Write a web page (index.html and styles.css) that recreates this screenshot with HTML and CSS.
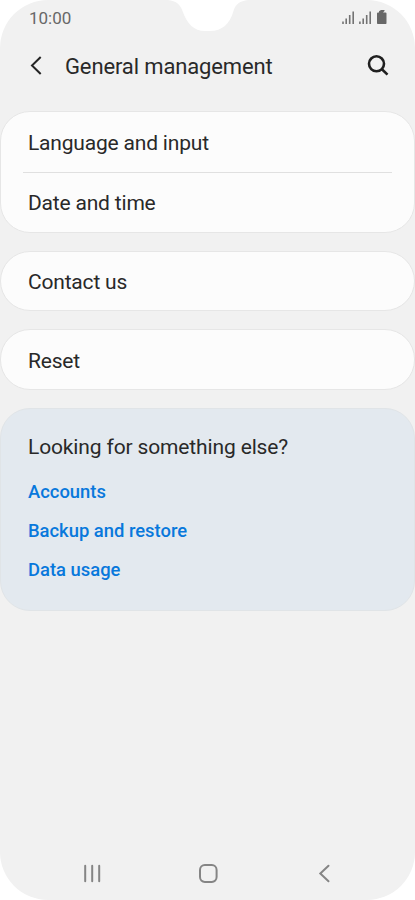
FILE: index.html
```html
<!DOCTYPE html>
<html lang="en">
<head>
<meta charset="utf-8">
<title>General management</title>
<link rel="stylesheet" href="styles.css">
</head>
<body>
<div class="phone">
  <svg class="notch" width="90" height="32" viewBox="0 0 90 32" aria-hidden="true"><path d="M5 0C13 1 17 4 19.500 11C24 24 31 31 42 31H47C59 31 67 24 70.500 11C72.500 4 77 1 85 0Z"/></svg>
  <header class="status">
    <span class="clock">10:00</span>
    <svg class="indicators" width="46" height="16" viewBox="0 0 46 16" aria-hidden="true">
      <path class="bars" d="M2 11.500v2.500M5.200 8.500v5.500M8.700 5v9M12.200 1.500v12.500M18.900 11.500v2.500M22.200 8.500v5.500M25.700 5v9M29.200 1.500v12.500"/>
      <path class="battery" d="M37 2.500H38V1.300L40 0H43.500V1L42 2.500H44.500a1 1 0 0 1 1 1V13.300a.8 .8 0 0 1-.8 .8H36.800a.8 .8 0 0 1-.8-.8V3.500a1 1 0 0 1 1-1Z"/>
    </svg>
  </header>
  <div class="toolbar">
    <svg class="back" width="12" height="20" viewBox="0 0 12 20" aria-hidden="true"><path d="M10.700 1L2 9.500L10.700 18"/></svg>
    <h1 class="title">General management</h1>
    <svg class="search" width="22" height="22" viewBox="0 0 22 22" aria-hidden="true"><circle cx="9.500" cy="8.800" r="7.500"/><path d="M14.900 14.200L20.500 19.600"/></svg>
  </div>
  <main class="content">
    <section class="card">
      <div class="row">Language and input</div>
      <div class="divider"></div>
      <div class="row">Date and time</div>
    </section>
    <section class="card contact"><div class="row">Contact us</div></section>
    <section class="card"><div class="row">Reset</div></section>
    <section class="card suggestions">
      <h2 class="question">Looking for something else?</h2>
      <a class="link">Accounts</a>
      <a class="link">Backup and restore</a>
      <a class="link">Data usage</a>
    </section>
  </main>
  <nav class="navbar">
    <svg width="20" height="20" viewBox="0 0 20 20" aria-hidden="true"><path d="M3.200 2.700V18.300M10.200 2.700V18.300M17.200 2.700V18.300"/></svg>
    <svg width="20" height="20" viewBox="0 0 20 20" aria-hidden="true"><rect x="1" y="2.100" width="16.600" height="16.800" rx="4.800"/></svg>
    <svg width="20" height="20" viewBox="0 0 20 20" aria-hidden="true"><path d="M13.500 2.700L5.300 10.500L13.500 18.300"/></svg>
  </nav>
</div>
</body>
</html>
```
FILE: styles.css
```css
* { box-sizing: border-box; }
body { margin: 0; background: #fff; font-family: Roboto, sans-serif; color: #292929; }
.phone { position: relative; display: flex; flex-direction: column; width: 415px; height: 900px; overflow: hidden; background: #f1f1f1; border-radius: 48px; }
.notch { position: absolute; top: 0; left: 163px; fill: #fff; }
.status { display: flex; justify-content: space-between; align-items: center; height: 36px; padding: 0 28px 0 29px; }
.clock { font-size: 17px; line-height: 20px; color: #686868; }
.indicators { fill: none; }
.bars { stroke: #737373; stroke-width: 1.6; }
.battery { fill: #686868; }
.toolbar { display: flex; align-items: center; height: 60px; padding: 0 26px 0 30px; }
.back { fill: none; stroke: #252525; stroke-width: 2; }
.title { flex: 1; margin: 2px 0 0 23px; font-size: 22px; line-height: 28px; font-weight: 400; letter-spacing: -0.13px; }
.search { fill: none; stroke: #202020; stroke-width: 2.6; }
.content { display: flex; flex-direction: column; gap: 18px; padding-top: 15px; }
.card { border: 1px solid #e6e6e6; border-radius: 30px; background: #fcfcfc; }
.row { display: flex; align-items: center; height: 59px; padding: 2px 27px 0; font-size: 21px; letter-spacing: -0.19px; }
.contact .row { height: 58px; }
.divider { height: 1px; margin: 1px 22px 0; background: #e0e0e0; }
.divider + .row { padding-top: 1px; }
.suggestions { display: flex; flex-direction: column; height: 203px; padding: 24px 27px; background: #e3e9ef; border-color: #e0e4e7; }
.question { margin: 0 0 11px; font-size: 21px; line-height: 28px; font-weight: 400; letter-spacing: -0.14px; }
.link { font-size: 18.4px; line-height: 39px; font-weight: 500; color: #0878dc; }
.navbar { display: flex; justify-content: space-between; align-items: center; height: 54px; margin-top: auto; padding: 0 80px 0 82px; }
.navbar svg { fill: none; stroke: #858585; stroke-width: 2; stroke-linecap: round; }
```
